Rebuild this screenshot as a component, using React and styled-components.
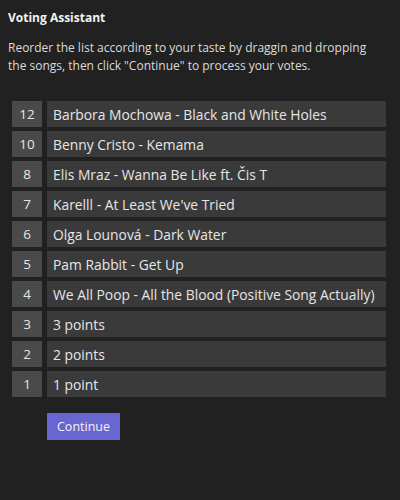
import React from "react"
import styled, { createGlobalStyle } from "styled-components"

const GlobalStyle = createGlobalStyle`
  html, body {
    margin: 0;
    padding: 0;
    background: #212121;
  }
  body {
    font-family: "Open Sans", "Noto Sans", sans-serif;
  }
`

const Page = styled.div`
  width: 400px;
  height: 500px;
  box-sizing: border-box;
  padding: 9px 8px 0 8px;
  background: #212121;
  color: #e4e4e4;
`

const Title = styled.h1`
  margin: 0;
  font-size: 12px;
  font-weight: 700;
  line-height: 18px;
  color: #f2f2f2;
`

const Intro = styled.p`
  margin: 12px 0 0 0;
  max-width: 372px;
  font-size: 12px;
  line-height: 18px;
  color: #dcdcdc;
`

const List = styled.div`
  display: flex;
  flex-direction: column;
  gap: 4px;
  margin: 26px 6px 0 4px;
`

const Row = styled.div`
  display: flex;
  gap: 5px;
  height: 26px;
`

const Points = styled.div`
  width: 30px;
  flex: none;
  display: flex;
  align-items: center;
  justify-content: center;
  background: #4a4a4a;
  font-size: 13.5px;
  color: #e6e6e6;
`

const Song = styled.div`
  flex: 1;
  display: flex;
  align-items: center;
  padding-left: 6px;
  background: #3a3a3a;
  font-size: 13.85px;
  color: #e6e6e6;
  white-space: nowrap;
  overflow: hidden;
`

const Button = styled.button`
  margin: 16px 0 0 39px;
  width: 73px;
  height: 27px;
  border: none;
  background: #6866d0;
  color: #f4f4f4;
  font-family: inherit;
  font-size: 12.5px;
  padding: 0;
  cursor: pointer;
`

const songs = [
  [12, "Barbora Mochowa - Black and White Holes"],
  [10, "Benny Cristo - Kemama"],
  [8, "Elis Mraz - Wanna Be Like ft. Čis T"],
  [7, "Karelll - At Least We've Tried"],
  [6, "Olga Lounová - Dark Water"],
  [5, "Pam Rabbit - Get Up"],
  [4, "We All Poop - All the Blood (Positive Song Actually)"],
  [3, "3 points"],
  [2, "2 points"],
  [1, "1 point"],
]

const App = () => {
  return (
    <>
      <GlobalStyle />
      <Page>
        <Title>Voting Assistant</Title>
        <Intro>
          Reorder the list according to your taste by draggin and dropping the songs, then click
          "Continue" to process your votes.
        </Intro>
        <List>
          {songs.map(([pts, name]) => (
            <Row key={pts}>
              <Points>{pts}</Points>
              <Song>{name}</Song>
            </Row>
          ))}
        </List>
        <Button>Continue</Button>
      </Page>
    </>
  )
}

export default App
